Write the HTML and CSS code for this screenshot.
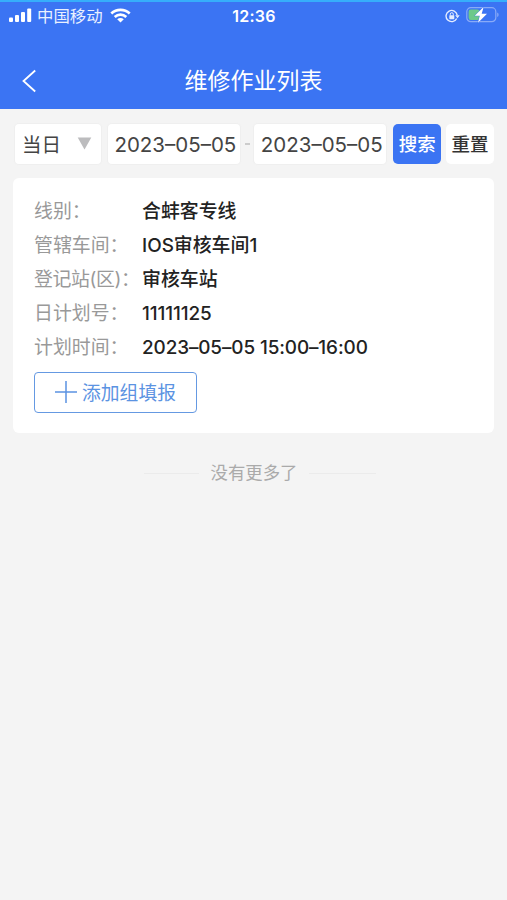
FILE: index.html
```html
<!DOCTYPE html>
<html lang="zh-CN">
<head>
<meta charset="utf-8">
<title>维修作业列表</title>
<link rel="stylesheet" href="styles.css">
</head>
<body>
<header class="header">
  <div class="status">
    <div class="carrier">
      <svg class="signal" width="23" height="15" viewBox="0 0 23 15" fill="#fff"><rect x="0" y="9.5" width="4" height="4.5" rx="1"/><rect x="6" y="7" width="4" height="7" rx="1"/><rect x="12" y="4" width="4" height="10" rx="1"/><rect x="18.200" y="0.500" width="4" height="13.500" rx="1"/></svg>
      <span class="carrier-name">中国移动</span>
      <svg class="wifi" width="21" height="15" viewBox="0 0 21 15" fill="none" stroke="#fff" stroke-width="2.700"><path d="M1.300 5.600C6.500.7 14.500.7 19.700 5.600"/><path d="M4.700 9C8.100 5.900 12.900 5.900 16.300 9"/><path d="M10.500 14.500L7.200 11.200C9.200 9.600 11.800 9.600 13.800 11.200Z" fill="#fff" stroke="none"/></svg>
    </div>
    <time class="clock">12:36</time>
    <div class="power">
      <svg width="15" height="14" viewBox="0 0 15 14" fill="none" stroke="#e4ecff" stroke-width="1.400"><path d="M11.700 9.500A5.600 5.600 0 1 1 12.200 6.200"/><path d="M10.200 6.300H14.700L12.500 9.200Z" fill="#e4ecff" stroke="none"/><rect x="4.300" y="6.300" width="5" height="3.900" rx=".6" fill="#e4ecff" stroke="none"/><path d="M5.300 6.500V5.200A1.500 1.500 0 0 1 8.300 5.200V6.500" stroke-width="1"/></svg>
      <svg class="battery" width="33" height="18" viewBox="0 0 33 18"><rect x=".8" y="1.700" width="29" height="14" rx="4" fill="none" stroke="#89aaf7" stroke-width="1.200"/><path d="M31.200 6.500V11Q32.600 10.500 32.600 8.700T31.200 6.500Z" fill="#89aaf7"/><rect x="2.600" y="3.500" width="11" height="10.400" rx="2.200" fill="#6cc98a"/><path d="M17.600 1L8.700 9.700H13.800L12 16.800L21 7.800H15.700Z" fill="#fff" stroke="#3b74f3" stroke-width=".8" paint-order="stroke"/></svg>
    </div>
  </div>
  <nav class="nav">
    <svg class="back" width="15" height="24" viewBox="0 0 15 24" fill="none" stroke="#fff" stroke-width="1.800"><path d="M13.200 1.500L1.500 12L13.200 22.500"/></svg>
    <h1 class="title">维修作业列表</h1>
  </nav>
</header>
<main class="main">
  <form class="filters">
    <div class="field day"><span>当日</span><svg width="15" height="13" viewBox="0 0 15 13"><path d="M.7.500H14.300L7.500 12.500Z" fill="#bcbcbe"/></svg></div>
    <div class="field date">2023–05–05</div>
    <span class="dash"></span>
    <div class="field date">2023–05–05</div>
    <button class="btn search" type="button">搜索</button>
    <button class="btn reset" type="button">重置</button>
  </form>
  <section class="card">
    <dl class="rows">
      <dt>线别：</dt><dd>合蚌客专线</dd>
      <dt>管辖车间：</dt><dd>IOS审核车间1</dd>
      <dt class="station">登记站(区)：</dt><dd>审核车站</dd>
      <dt>日计划号：</dt><dd class="number">11111125</dd>
      <dt>计划时间：</dt><dd class="period">2023–05–05 15:00–16:00</dd>
    </dl>
    <button class="add" type="button"><svg width="22" height="22" viewBox="0 0 22 22" stroke="#5b93e2" stroke-width="1.500"><path d="M0 11H22M11 0V22"/></svg><span>添加组填报</span></button>
  </section>
  <div class="end"><span>没有更多了</span></div>
</main>
</body>
</html>
```
FILE: styles.css
```css
* { box-sizing: border-box; }
body {
  margin: 0;
  min-height: 900px;
  background: #f4f4f4;
  color: #333;
  font-family: Inter, "Noto Sans CJK SC", sans-serif;
}
svg { display: block; flex: none; }
button { font-family: inherit; padding: 0; }
.header {
  height: 109px;
  background: #3b74f3;
  border-top: 2px solid #36aefb;
  color: #fff;
}
.status {
  height: 27px;
  display: grid;
  grid-template-columns: 1fr auto 1fr;
  align-items: center;
  padding: 0 8px 0 9px;
}
.carrier { display: flex; align-items: center; }
.carrier-name { font-size: 16.4px; line-height: 24px; margin: 0 7px 0 5px; color: #e9f0ff; }
.clock { font-size: 16px; font-weight: 600; letter-spacing: .3px; }
.power { display: flex; align-items: center; justify-content: flex-end; gap: 6px; }
.battery { margin-top: -1px; }
.nav {
  height: 80px;
  display: grid;
  grid-template-columns: 1fr auto 1fr;
  align-items: center;
  padding: 0 22px;
}
.back { margin-top: 24px; }
.title { margin: 24px 0 0; font-size: 23px; line-height: 34px; font-weight: 400; }
.filters { display: flex; padding: 15px 13px 0; height: 69px; align-items: flex-start; }
.field {
  height: 40px;
  background: #fff;
  border-radius: 4px;
  box-shadow: 0 0 1px 1px #efefef;
  display: flex;
  align-items: center;
  color: #444;
  font-size: 20.500px;
  white-space: nowrap;
}
.day { width: 86px; margin: 0 7px 0 2px; padding: 0 9px 1px 7px; justify-content: space-between; font-size: 19.500px; }
.date { width: 133px; justify-content: center; padding-left: 3px; }
.dash { width: 5px; height: 2px; margin: 19px 4px 0 5px; background: #ccc; }
.btn { height: 40px; border: 0; border-radius: 5px; font-size: 18.500px; padding-bottom: 2px; }
.search { width: 48px; margin-left: 7px; background: #3b74f3; color: #fff; font-weight: 500; }
.reset { width: 48px; margin-left: 5px; background: #fff; color: #333; font-weight: 500; }
.card {
  height: 255px;
  margin: 0 13px;
  padding: 17px 21px 0;
  background: #fff;
  border-radius: 6px;
}
.rows {
  margin: 0;
  display: grid;
  grid-template-columns: 108px 1fr;
  grid-auto-rows: 34px;
  line-height: 34px;
  font-size: 18.900px;
  white-space: nowrap;
}
.rows dt { color: #999; }
.rows .station { letter-spacing: -.4px; }
.rows dd { margin: 0; color: #222; font-weight: 500; }
.rows .number, .rows .period { letter-spacing: -.1px; }
.add {
  width: 163px;
  height: 41px;
  margin-top: 7px;
  padding-bottom: 2px;
  border: 1.500px solid #6599e2;
  border-radius: 4px;
  background: #fff;
  color: #5b93e2;
  display: flex;
  align-items: center;
  justify-content: center;
  gap: 5px;
  font-size: 18.800px;
}
.end {
  display: flex;
  justify-content: center;
  align-items: center;
  gap: 12px;
  margin: 28px 0 0 13px;
  color: #aaa;
  font-size: 17.400px;
  line-height: 24px;
}
.end::before, .end::after { content: ""; width: 55px; height: 1px; background: #ebebeb; }
.end::after { width: 67px; }
```
